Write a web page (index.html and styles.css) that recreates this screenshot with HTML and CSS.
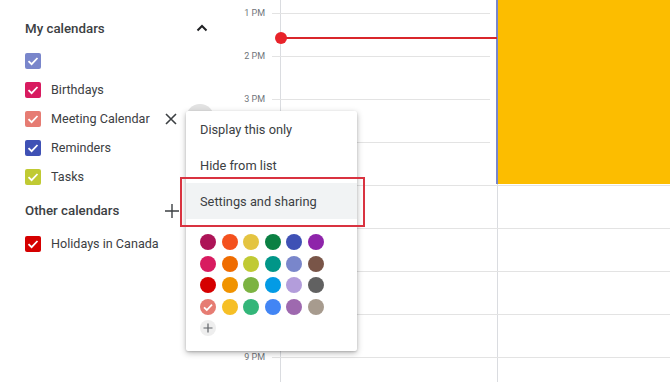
FILE: index.html
```html
<!DOCTYPE html>
<html>
<head>
<meta charset="utf-8">
<link rel="stylesheet" href="styles.css">
</head>
<body>
<div class="app">
  <aside class="sidebar">
    <div class="section-head first">
      <span>My calendars</span>
      <svg class="chev" width="12" height="8" viewBox="0 0 12 8"><path d="M1.5 6.5 6 2l4.5 4.5" fill="none" stroke="#202124" stroke-width="2"/></svg>
    </div>
    <ul class="cal-list">
      <li class="cal"><span class="cb c-lav"><svg viewBox="0 0 16 16"><path d="M3.5 8.2 6.6 11.2 12.5 5" fill="none" stroke="#fff" stroke-width="1.8"/></svg></span><span class="name"></span></li>
      <li class="cal"><span class="cb c-cherry"><svg viewBox="0 0 16 16"><path d="M3.5 8.2 6.6 11.2 12.5 5" fill="none" stroke="#fff" stroke-width="1.8"/></svg></span><span class="name">Birthdays</span></li>
      <li class="cal"><span class="cb c-flamingo"><svg viewBox="0 0 16 16"><path d="M3.5 8.2 6.6 11.2 12.5 5" fill="none" stroke="#fff" stroke-width="1.8"/></svg></span><span class="name">Meeting Calendar</span>
        <svg class="x" width="12" height="12" viewBox="0 0 12 12"><path d="M1 1l10 10M11 1 1 11" stroke="#3c4043" stroke-width="1.6"/></svg>
      </li>
      <li class="cal"><span class="cb c-blue"><svg viewBox="0 0 16 16"><path d="M3.5 8.2 6.6 11.2 12.5 5" fill="none" stroke="#fff" stroke-width="1.8"/></svg></span><span class="name">Reminders</span></li>
      <li class="cal"><span class="cb c-avocado"><svg viewBox="0 0 16 16"><path d="M3.5 8.2 6.6 11.2 12.5 5" fill="none" stroke="#fff" stroke-width="1.8"/></svg></span><span class="name">Tasks</span></li>
    </ul>
    <div class="section-head second">
      <span>Other calendars</span>
      <svg class="plus" width="14" height="14" viewBox="0 0 14 14"><path d="M7 0v14M0 7h14" stroke="#3c4043" stroke-width="1.4"/></svg>
    </div>
    <ul class="cal-list">
      <li class="cal"><span class="cb c-tomato"><svg viewBox="0 0 16 16"><path d="M3.5 8.2 6.6 11.2 12.5 5" fill="none" stroke="#fff" stroke-width="1.8"/></svg></span><span class="name">Holidays in Canada</span></li>
    </ul>
  </aside>

  <div class="gutter">
    <div class="tl">1 PM</div>
    <div class="tl">2 PM</div>
    <div class="tl">3 PM</div>
    <div class="tl">4 PM</div>
    <div class="tl">5 PM</div>
    <div class="tl">6 PM</div>
    <div class="tl">7 PM</div>
    <div class="tl">8 PM</div>
    <div class="tl">9 PM</div>
  </div>

  <div class="grid">
    <div class="row top"><div class="tick"></div><div class="col"></div><div class="col"></div></div>
    <div class="row"><div class="tick"></div><div class="col"></div><div class="col"></div></div>
    <div class="row"><div class="tick"></div><div class="col"></div><div class="col"></div></div>
    <div class="row"><div class="tick"></div><div class="col"></div><div class="col"></div></div>
    <div class="row"><div class="tick"></div><div class="col"></div><div class="col"></div></div>
    <div class="row"><div class="tick"></div><div class="col"></div><div class="col"></div></div>
    <div class="row"><div class="tick"></div><div class="col"></div><div class="col"></div></div>
    <div class="row"><div class="tick"></div><div class="col"></div><div class="col"></div></div>
    <div class="row"><div class="tick"></div><div class="col"></div><div class="col"></div></div>
    <div class="row"><div class="tick"></div><div class="col"></div><div class="col"></div></div>
    <div class="event"></div>
    <div class="now"><span class="now-dot"></span></div>
  </div>
</div>

<div class="hover-circle"></div>
<div class="menu">
  <div class="item">Display this only</div>
  <div class="item">Hide from list</div>
  <div class="item active">Settings and sharing</div>
  <div class="palette">
    <span class="sw" style="background:#ad1457"></span>
    <span class="sw" style="background:#f4511e"></span>
    <span class="sw" style="background:#e4c441"></span>
    <span class="sw" style="background:#0b8043"></span>
    <span class="sw" style="background:#3f51b5"></span>
    <span class="sw" style="background:#8e24aa"></span>
    <span class="sw" style="background:#d81b60"></span>
    <span class="sw" style="background:#ef6c00"></span>
    <span class="sw" style="background:#c0ca33"></span>
    <span class="sw" style="background:#009688"></span>
    <span class="sw" style="background:#7986cb"></span>
    <span class="sw" style="background:#795548"></span>
    <span class="sw" style="background:#d50000"></span>
    <span class="sw" style="background:#f09300"></span>
    <span class="sw" style="background:#7cb342"></span>
    <span class="sw" style="background:#039be5"></span>
    <span class="sw" style="background:#b39ddb"></span>
    <span class="sw" style="background:#616161"></span>
    <span class="sw" style="background:#e67c73"><svg viewBox="0 0 16 16"><path d="M4 8.3 6.8 11 12 5.6" fill="none" stroke="#fff" stroke-width="1.8"/></svg></span>
    <span class="sw" style="background:#f6bf26"></span>
    <span class="sw" style="background:#33b679"></span>
    <span class="sw" style="background:#4285f4"></span>
    <span class="sw" style="background:#9e69af"></span>
    <span class="sw" style="background:#a79b8e"></span>
    <span class="sw add"><svg viewBox="0 0 16 16"><path d="M8 3.5v9M3.5 8h9" stroke="#5f6368" stroke-width="1.2"/></svg></span>
  </div>
</div>
<div class="highlight-box"></div>
</body>
</html>
```

FILE: styles.css
```css
* { box-sizing: border-box; }
html, body {
  margin: 0;
  padding: 0;
  background: #fff;
  width: 670px;
  height: 382px;
  overflow: hidden;
  font-family: Roboto, "Liberation Sans", Arial, sans-serif;
  color: #3c4043;
}
.app {
  display: flex;
  height: 382px;
  position: relative;
}
.sidebar {
  width: 230px;
  flex: none;
  padding-left: 25px;
  padding-top: 12px;
}
.section-head {
  display: flex;
  align-items: center;
  justify-content: space-between;
  font-size: 13.3px;
  font-weight: 500;
  color: #3c4043;
  padding-right: 22px;
}
.section-head.first { height: 32px; margin-bottom: 2px; }
.section-head.second { height: 37px; margin-top: 1px; padding-right: 51px; }
.cal-list { list-style: none; margin: 0; padding: 0; }
.cal {
  height: 29px;
  display: flex;
  align-items: center;
  font-size: 12.6px;
  color: #3c4043;
  position: relative;
}
.cb {
  width: 16px;
  height: 16px;
  border-radius: 2px;
  display: inline-flex;
  flex: none;
}
.cb svg { width: 16px; height: 16px; }
.c-lav { background: #7986cb; }
.c-cherry { background: #d81b60; }
.c-flamingo { background: #e67c73; }
.c-blue { background: #3f51b5; }
.c-avocado { background: #c0ca33; }
.c-tomato { background: #d50000; }
.name { margin-left: 10px; }
.x { margin-left: 15px; }

.gutter {
  width: 42px;
  flex: none;
  padding-top: 7px;
  padding-right: 7px;
}
.tl {
  height: 43px;
  line-height: 12px;
  font-size: 9px;
  color: #70757a;
  text-align: right;
}

.grid {
  flex: 1;
  position: relative;
  display: flex;
  flex-direction: column;
}
.row {
  display: grid;
  grid-template-columns: 8px 217px 1fr;
  height: 43px;
  flex: none;
  border-top: 1px solid #e3e3e3;
}
.row.top { height: 13px; border-top: none; }
.col { border-left: 1px solid #dadce0; }

.event {
  position: absolute;
  left: 218px;
  top: 0;
  width: 180px;
  height: 184px;
  background: linear-gradient(to right, #fff 0, #fff 6px, #7986cb 6px, #7986cb 8px, #fcbd00 8px);
}
.now {
  position: absolute;
  left: 9px;
  top: 37px;
  width: 216px;
  height: 2px;
  background: #d9262b;
}
.now-dot {
  position: absolute;
  left: -6px;
  top: -5px;
  width: 12px;
  height: 12px;
  border-radius: 50%;
  background: #e8232a;
}

.hover-circle {
  position: absolute;
  left: 186px;
  top: 104px;
  width: 28px;
  height: 28px;
  border-radius: 50%;
  background: #e2e2e2;
}
.menu {
  position: absolute;
  left: 186px;
  top: 111px;
  width: 171px;
  background: #fff;
  box-shadow: 0 2px 6px rgba(0,0,0,0.28), 0 1px 2px rgba(0,0,0,0.15);
  border-radius: 2px;
}
.item {
  height: 36px;
  display: flex;
  align-items: center;
  padding-left: 14px;
  font-size: 12.8px;
  color: #3c4043;
}
.item.active { background: #f1f3f4; }
.palette {
  display: grid;
  grid-template-columns: repeat(6, 16px);
  column-gap: 5.6px;
  row-gap: 5.6px;
  padding: 15px 0 15px 14px;
}
.sw {
  width: 16px;
  height: 16px;
  border-radius: 50%;
  display: inline-flex;
}
.sw svg { width: 16px; height: 16px; }
.sw.add { background: #eeeeee; }

.highlight-box {
  position: absolute;
  left: 180px;
  top: 177px;
  width: 185px;
  height: 50px;
  border: 2px solid #d93340;
}
```
